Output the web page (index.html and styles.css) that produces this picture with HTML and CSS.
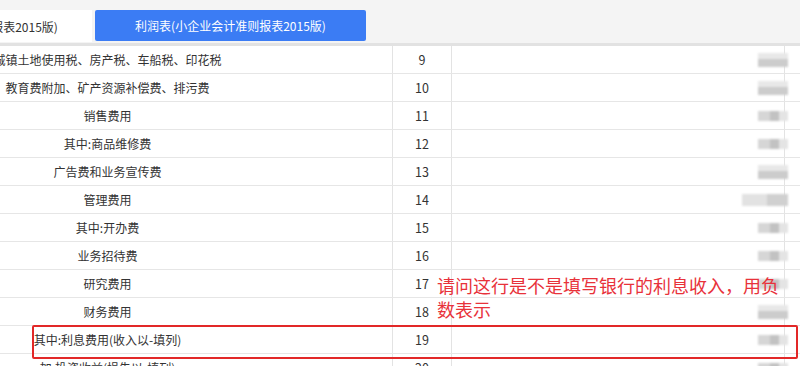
FILE: index.html
```html
<!DOCTYPE html>
<html lang="zh-CN">
<head>
<meta charset="utf-8">
<title>利润表</title>
<link rel="stylesheet" href="styles.css">
</head>
<body>
<div class="page">
  <div class="tabbar">
    <div class="tab">资产负债表(小企业会计准则报表2015版)</div>
    <div class="tab active">利润表(小企业会计准则报表2015版)</div>
  </div>
  <div class="table">
    <div class="row"><div class="name">城镇土地使用税、房产税、车船税、印花税</div><div class="num">9</div><div class="val"><span class="blur b1"></span></div><div class="tail"></div></div>
    <div class="row"><div class="name">教育费附加、矿产资源补偿费、排污费</div><div class="num">10</div><div class="val"><span class="blur b1"></span></div><div class="tail"></div></div>
    <div class="row"><div class="name">销售费用</div><div class="num">11</div><div class="val"><span class="blur"></span></div><div class="tail"></div></div>
    <div class="row"><div class="name">其中:商品维修费</div><div class="num">12</div><div class="val"><span class="blur"></span></div><div class="tail"></div></div>
    <div class="row"><div class="name">广告费和业务宣传费</div><div class="num">13</div><div class="val"><span class="blur b1"></span></div><div class="tail"></div></div>
    <div class="row"><div class="name">管理费用</div><div class="num">14</div><div class="val"><span class="blur wide"></span></div><div class="tail"></div></div>
    <div class="row"><div class="name">其中:开办费</div><div class="num">15</div><div class="val"><span class="blur"></span></div><div class="tail"></div></div>
    <div class="row"><div class="name">业务招待费</div><div class="num">16</div><div class="val"><span class="blur"></span></div><div class="tail"></div></div>
    <div class="row"><div class="name">研究费用</div><div class="num">17</div><div class="val"><span class="blur"></span></div><div class="tail"></div></div>
    <div class="row"><div class="name">财务费用</div><div class="num">18</div><div class="val"><span class="blur b1"></span></div><div class="tail"></div></div>
    <div class="row"><div class="name">其中:利息费用(收入以-填列)</div><div class="num">19</div><div class="val"><span class="blur"></span></div><div class="tail"></div></div>
    <div class="row"><div class="name">加:投资收益(损失以-填列)</div><div class="num">20</div><div class="val"><span class="blur"></span></div><div class="tail"></div></div>
  </div>
  <div class="note">请问这行是不是填写银行的利息收入，用负<br>数表示</div>
  <div class="mark"></div>
</div>
</body>
</html>
```
FILE: styles.css
```css
html, body {
  margin: 0;
  padding: 0;
  background: #ffffff;
}
body {
  width: 800px;
  height: 366px;
  overflow: hidden;
  font-family: "Noto Sans CJK SC", "Microsoft YaHei", sans-serif;
  color: #333333;
}
.page {
  position: relative;
  width: 800px;
  height: 366px;
  overflow: hidden;
}
.tabbar {
  display: flex;
  gap: 3px;
  height: 33px;
  padding-top: 10px;
  margin-left: -179px;
  background: #f4f4f4;
  border-bottom: 3px solid #e2e2e2;
  box-sizing: content-box;
}
.tab {
  width: 271px;
  height: 32px;
  flex: none;
  box-sizing: border-box;
  padding-right: 12px;
  display: flex;
  align-items: center;
  justify-content: center;
  font-size: 12px;
  color: #333333;
  background: #ffffff;
  white-space: nowrap;
}
.tab.active {
  height: 31px;
  padding-right: 0;
  background: #3b7cf4;
  color: #ffffff;
  border-radius: 2px;
}
.table {
  display: flex;
  flex-direction: column;
}
.row {
  display: grid;
  grid-template-columns: 393px 59px 333px 15px;
  height: 28px;
  border-bottom: 1px solid #e6e6e6;
  box-sizing: border-box;
}
.name {
  display: flex;
  align-items: center;
  justify-content: center;
  padding-right: 177px;
  font-size: 12px;
  white-space: nowrap;
  border-right: 1px solid #e3e3e3;
}
.num {
  display: flex;
  align-items: center;
  justify-content: center;
  font-size: 12.5px;
  border-right: 1px solid #e3e3e3;
}
.val {
  display: flex;
  align-items: center;
  justify-content: flex-end;
  border-right: 1px solid #e3e3e3;
}
.blur {
  display: block;
  width: 30px;
  height: 10px;
  margin-right: -4px;
  background: linear-gradient(90deg, #d6d6d6 0 40%, #c2c2c2 40% 70%, #e4e4e4 70% 100%);
  filter: blur(1.2px);
}
.blur.b1 {
  height: 14px;
  background: linear-gradient(180deg, #e8e8e8 0 40%, #cccccc 40% 100%);
}
.blur.wide {
  width: 46px;
  height: 12px;
  background: linear-gradient(90deg, #e2e2e2 0 55%, #d0d0d0 55% 100%);
}
.note {
  position: absolute;
  left: 437px;
  top: 273px;
  font-size: 18px;
  line-height: 24px;
  color: #e8323a;
  white-space: nowrap;
}
.mark {
  position: absolute;
  left: 32px;
  top: 325px;
  width: 766px;
  height: 34px;
  box-sizing: border-box;
  border: 2px solid #e22828;
  border-radius: 2px;
}
```
